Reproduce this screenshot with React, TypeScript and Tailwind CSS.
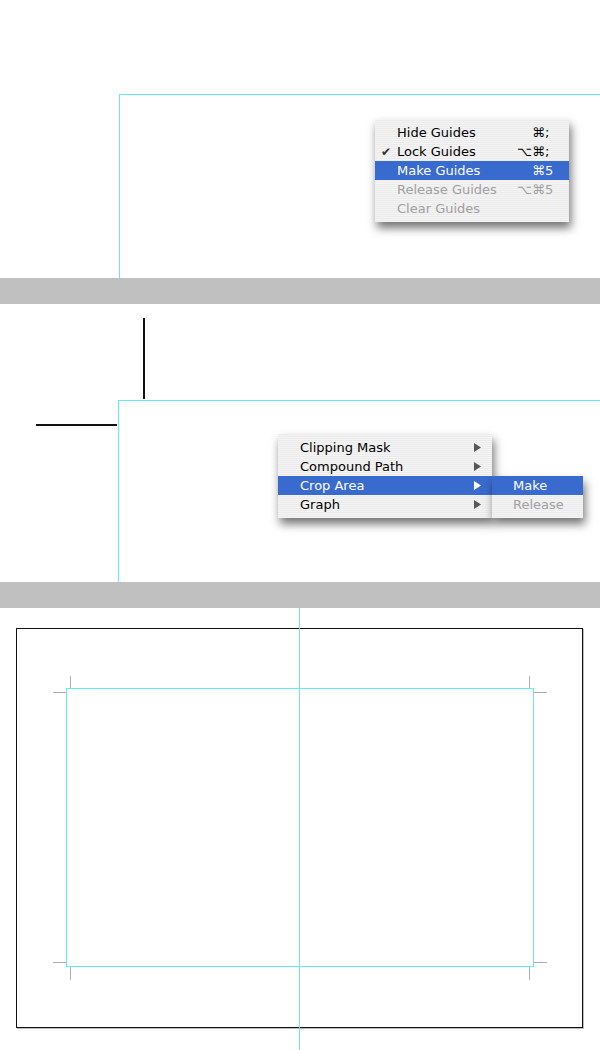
const guide = 'border-[#66e9ef]';
const stripes =
  'bg-[repeating-linear-gradient(0deg,#f4f4f4_0px,#f4f4f4_1px,#ebebeb_1px,#ebebeb_2px)]';

type Item = {
  label: string;
  mods?: string;
  keyName?: string;
  checked?: boolean;
  active?: boolean;
  disabled?: boolean;
  submenu?: boolean;
};

const Arrow = ({ light }: { light?: boolean }) => (
  <svg width="7" height="9" viewBox="0 0 7 9" className="shrink-0">
    <polygon points="0,0 7,4.5 0,9" fill={light ? '#ffffff' : '#585858'} />
  </svg>
);

const MenuRow = ({ item, padLeft, padRight }: { item: Item; padLeft: string; padRight: string }) => {
  const color = item.active ? 'bg-[#386bcd] text-white' : item.disabled ? 'text-[#a0a0a0]' : 'text-black';
  return (
    <div className={`relative flex h-[19px] items-center ${padLeft} ${padRight} ${color}`}>
      {item.checked && (
        <span className="absolute left-[6px] top-[1px] text-[12px] leading-[19px] text-[#333]">✔</span>
      )}
      <span className="flex-1 whitespace-nowrap text-[13px] leading-none">{item.label}</span>
      {item.mods !== undefined && (
        <>
          <span className="text-right text-[13px] leading-none">{item.mods}</span>
          <span className="w-[10px] text-[13px] leading-none">{item.keyName}</span>
        </>
      )}
      {item.submenu && <Arrow light={item.active} />}
    </div>
  );
};

const Menu = ({
  items,
  className,
  padLeft = 'pl-[22px]',
  padRight = 'pr-[14px]',
}: {
  items: Item[];
  className: string;
  padLeft?: string;
  padRight?: string;
}) => (
  <div className={`absolute ${stripes} shadow-[2px_6px_9px_rgba(0,0,0,0.55)] ${className}`}>
    {items.map((item) => (
      <MenuRow key={item.label} item={item} padLeft={padLeft} padRight={padRight} />
    ))}
  </div>
);

const guideItems: Item[] = [
  { label: 'Hide Guides', mods: '⌘', keyName: ';' },
  { label: 'Lock Guides', mods: '⌥⌘', keyName: ';', checked: true },
  { label: 'Make Guides', mods: '⌘', keyName: '5', active: true },
  { label: 'Release Guides', mods: '⌥⌘', keyName: '5', disabled: true },
  { label: 'Clear Guides', disabled: true },
];

const objectItems: Item[] = [
  { label: 'Clipping Mask', submenu: true },
  { label: 'Compound Path', submenu: true },
  { label: 'Crop Area', submenu: true, active: true },
  { label: 'Graph', submenu: true },
];

const cropItems: Item[] = [
  { label: 'Make', active: true },
  { label: 'Release', disabled: true },
];

const Band = () => <div className="h-[26px] bg-[#c0c0c0]" />;

// short gray tick used for the crop marks around the crop area
const Tick = ({ className }: { className: string }) => (
  <div className={`absolute bg-[#adadad] ${className}`} />
);

export default function App() {
  return (
    <div className="w-[600px] h-[1050px] overflow-hidden bg-white font-['DejaVu_Sans','Liberation_Sans',sans-serif]">
      {/* step 1: guides menu */}
      <div className="flex h-[278px] flex-col pl-[119px] pt-[94px]">
        <div className={`relative flex-1 border-l border-t ${guide}`}>
          <Menu items={guideItems} className="left-[255px] top-[24px] w-[194px] py-[4px]" />
        </div>
      </div>

      <Band />

      {/* step 2: crop area menu */}
      <div className="flex h-[278px] flex-col">
        <div className="ml-[143px] mt-[14px] h-[81px] w-[2px] bg-[#111]" />
        <div className="mt-[1px] flex flex-1">
          <div className="w-[118px] shrink-0">
            <div className="ml-[36px] mt-[24px] h-[2px] w-[81px] bg-[#111]" />
          </div>
          <div className={`relative flex-1 border-l border-t ${guide}`}>
            <Menu
              items={objectItems}
              className="left-[159px] top-[33px] z-0 w-[214px] py-[4px]"
              padRight="pr-[11px]"
            />
            <Menu
              items={cropItems}
              className="left-[373px] top-[75px] z-10 w-[91px] pb-[4px]"
              padLeft="pl-[21px]"
            />
          </div>
        </div>
      </div>

      <Band />

      {/* step 3: crop marks */}
      <div className="relative h-[442px] pt-[20px]">
        <div className="ml-[16px] h-[400px] w-[567px] border border-[#111] shadow-[1px_1px_0_#bdbdbd]">
          <div className={`relative ml-[49px] mt-[59px] h-[279px] w-[468px] border ${guide}`}>
            <Tick className="left-[3px] top-[-13px] h-[12px] w-px" />
            <Tick className="left-[-14px] top-[3px] h-px w-[13px]" />
            <Tick className="left-[462px] top-[-13px] h-[12px] w-px" />
            <Tick className="left-[467px] top-[3px] h-px w-[13px]" />
            <Tick className="left-[-14px] top-[273px] h-px w-[13px]" />
            <Tick className="left-[3px] top-[278px] h-[13px] w-px" />
            <Tick className="left-[467px] top-[273px] h-px w-[13px]" />
            <Tick className="left-[462px] top-[278px] h-[13px] w-px" />
          </div>
        </div>
        <div className="absolute bottom-0 left-[299px] top-0 w-px bg-[#66e9ef]" />
      </div>
    </div>
  );
}
